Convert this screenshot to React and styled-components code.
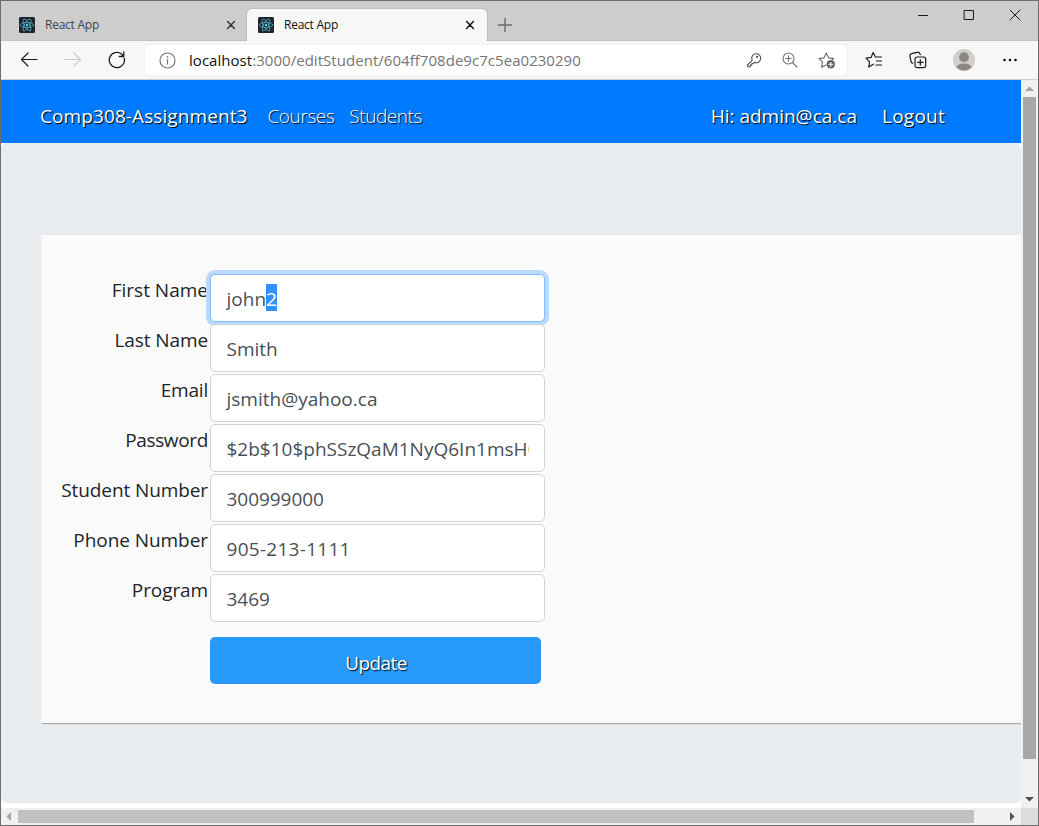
import React from "react";
import styled, { createGlobalStyle } from "styled-components";

const Global = createGlobalStyle`
  *, *::before, *::after { box-sizing: border-box; }
  html, body { margin: 0; padding: 0; overflow: hidden; }
  body { font-family: "Open Sans", "Noto Sans", sans-serif; background: #fff; }
`;

const Window = styled.div`
  width: 1039px;
  height: 826px;
  border: 1px solid #6e6c6d;
  display: flex;
  flex-direction: column;
  background: #fff;
  overflow: hidden;
`;

const TabStrip = styled.div`
  height: 40px;
  flex: none;
  display: flex;
  align-items: flex-end;
  background: #cdcdcd;
  box-shadow: inset 0 -1px #c2c2c2;
`;

const Tab = styled.div`
  width: ${(p) => (p.$active ? 240 : 246)}px;
  height: 32px;
  display: flex;
  align-items: center;
  padding: 0 ${(p) => (p.$active ? 12 : 11)}px 0 ${(p) => (p.$active ? 11 : 18)}px;
  border-radius: 5px 5px 0 0;
  background: ${(p) => (p.$active ? "#f7f7f7" : "transparent")};
  box-shadow: ${(p) => (p.$active ? "0 0 2px rgba(0,0,0,0.28)" : "none")};
  clip-path: inset(-3px -3px 0 -3px);
  color: ${(p) => (p.$active ? "#111" : "#444")};
`;

const TabTitle = styled.span`
  flex: 1;
  margin-left: 10px;
  font-size: 12px;
  line-height: 16px;
  letter-spacing: -0.25px;
`;

const Icon = styled.svg`
  display: block;
  flex: none;
  fill: none;
  stroke: ${(p) => p.$color || "#1b1b1b"};
  stroke-width: ${(p) => p.$weight || 1.2};
  stroke-linecap: round;
  stroke-linejoin: round;
  margin-left: ${(p) => p.$gap || 0}px;
`;

const NewTab = styled.div`
  align-self: stretch;
  display: flex;
  align-items: center;
  padding: 8px 0 0 10px;
`;

const WindowButtons = styled.div`
  margin-left: auto;
  align-self: flex-start;
  display: flex;
  align-items: center;
  height: 28px;
  padding-right: 17px;
`;

const Toolbar = styled.div`
  height: 39px;
  flex: none;
  display: flex;
  align-items: center;
  background: #f7f7f7;
  border-bottom: 1px solid #cfcfcf;
  padding-left: 19px;
`;

const AddressBar = styled.div`
  width: 701px;
  height: 30px;
  margin-left: 19px;
  display: flex;
  align-items: center;
  padding: 0 10px 0 14px;
  background: #fff;
  border-radius: 4px;
  box-shadow: 0 0 3px rgba(0, 0, 0, 0.06);
`;

const Url = styled.div`
  flex: 1;
  margin-left: 13px;
  font-size: 15px;
  line-height: 22px;
  letter-spacing: ${(p) => p.$track}px;
  white-space: nowrap;
  color: #757575;
`;

const Host = styled.span`
  color: #111;
`;

const Viewport = styled.div`
  flex: 1;
  display: flex;
  min-height: 0;
`;

const Page = styled.div`
  width: 1020px;
  height: 728px;
  flex: none;
  overflow: hidden;
`;

const Navbar = styled.nav`
  height: 63px;
  display: flex;
  align-items: center;
  padding: 9px 76px 1px 39px;
  background: #007bff;
`;

const NavText = styled.span`
  font-size: 19px;
  line-height: 30px;
  font-weight: ${(p) => (p.$light ? 300 : 400)};
  letter-spacing: ${(p) => p.$track || 0}px;
  margin-left: ${(p) => p.$gap || 0}px;
  white-space: nowrap;
  color: #fff;
  text-shadow: 1px 1px 1px #000;
`;

const Spacer = styled.div`
  flex: 1;
`;

const Jumbotron = styled.main`
  height: 660px;
  padding: 92px 0 0 40px;
  background: #e8ecef;
  border-radius: 6px;
  overflow: hidden;
`;

const Card = styled.div`
  width: 1000px;
  height: 488px;
  padding: 39px 0 0;
  background: #fafafa;
  box-shadow: 1px 1px 1px #a8a8a8;
`;

const Field = styled.div`
  height: 50px;
  display: flex;
`;

const Label = styled.label`
  width: 167px;
  margin-right: 2px;
  text-align: right;
  font-size: 19px;
  line-height: 32px;
  letter-spacing: ${(p) => p.$track || 0}px;
  color: #212529;
  white-space: nowrap;
`;

const Input = styled.div`
  width: 335px;
  height: 48px;
  padding: 0 15px;
  border: 1px solid ${(p) => (p.$focus ? "#80bdff" : "#ced4da")};
  border-radius: 5px;
  background: #fff;
  box-shadow: ${(p) => (p.$focus ? "0 0 0 4px #bad9fb" : "none")};
`;

const Value = styled.div`
  overflow: hidden;
  white-space: nowrap;
  font-size: 19px;
  height: 46px;
  line-height: 31px;
  padding: 9px 0 0 0.5px;
  letter-spacing: ${(p) => p.$track || 0}px;
  color: #495057;
`;

const Selected = styled.span`
  display: inline-block;
  vertical-align: top;
  height: 27px;
  background: #3390ff;
  color: #fff;
`;

const Submit = styled.div`
  width: 331px;
  height: 47px;
  margin: 13px 0 0 169px;
  padding: 5px 0 0 1px;
  display: flex;
  justify-content: center;
  align-items: center;
  background: #2699fb;
  border-radius: 5px;
`;

const ScrollY = styled.div`
  width: 17px;
  display: flex;
  flex-direction: column;
  align-items: center;
  justify-content: space-between;
  background: #f0f0f0;
`;

const ThumbY = styled.div`
  width: 13px;
  height: 662px;
  background: #a8a8a8;
`;

const ScrollX = styled.div`
  height: 17px;
  flex: none;
  display: flex;
  align-items: center;
  background: #f0f0f0;
`;

const ThumbX = styled.div`
  width: 956px;
  height: 13px;
  background: #c1c1c1;
`;

const Corner = styled.div`
  width: 17px;
  height: 17px;
  margin-left: 1px;
  background: #dcdcdc;
`;

const ArrowIcon = styled.svg`
  display: block;
  flex: none;
`;

const Arrow = ({ d, color }) => (
  <ArrowIcon width="17" height="17" viewBox="0 0 17 17">
    <path d={d} fill={color} />
  </ArrowIcon>
);

const ReactLogo = () => (
  <Icon width="16" height="16" viewBox="0 0 16 16" $color="#4fb3cc" $weight={0.75}>
    <rect width="16" height="16" rx="1.5" fill="#20232a" stroke="none" />
    <ellipse cx="8" cy="8" rx="6.7" ry="2.6" />
    <ellipse cx="8" cy="8" rx="6.7" ry="2.6" transform="rotate(60 8 8)" />
    <ellipse cx="8" cy="8" rx="6.7" ry="2.6" transform="rotate(120 8 8)" />
    <circle cx="8" cy="8" r="1.2" fill="#61dafb" stroke="none" />
  </Icon>
);

const TabClose = ({ color }) => (
  <Icon width="10" height="10" viewBox="0 0 10 10" $color={color} $weight={1.4}>
    <path d="M1.6 1.6l6.800 6.800M8.400 1.600L1.600 8.400" />
  </Icon>
);

const fields = [
  { label: "First Name", value: "john", selected: "2" },
  { label: "Last Name", labelTrack: -0.1, value: "Smith" },
  { label: "Email", labelTrack: -0.2, value: "jsmith@yahoo.ca" },
  { label: "Password", labelTrack: -0.35, value: "$2b$10$phSSzQaM1NyQ6In1msHO" },
  { label: "Student Number", labelTrack: -0.1, value: "300999000", valueTrack: -0.05 },
  { label: "Phone Number", labelTrack: -0.06, value: "905-213-1111", valueTrack: 0.28 },
  { label: "Program", labelTrack: -0.1, value: "3469" },
];

export default function App() {
  return (
    <Window>
      <Global />
      <TabStrip>
        <Tab>
          <ReactLogo />
          <TabTitle>React App</TabTitle>
          <TabClose color="#333" />
        </Tab>
        <Tab $active>
          <ReactLogo />
          <TabTitle>React App</TabTitle>
          <TabClose color="#111" />
        </Tab>
        <NewTab>
          <Icon width="16" height="16" viewBox="0 0 16 16" $color="#6a6a6a" $weight={1.4}>
            <path d="M8 1.5v13M1.5 8h13" />
          </Icon>
        </NewTab>
        <WindowButtons>
          <Icon width="12" height="12" viewBox="0 0 12 12" $weight={1}>
            <path d="M1.5 6.5h9" />
          </Icon>
          <Icon width="12" height="12" viewBox="0 0 12 12" $weight={1} $gap={34}>
            <path d="M1.5 1.5h9v9h-9z" strokeLinejoin="miter" />
          </Icon>
          <Icon width="12" height="12" viewBox="0 0 12 12" $weight={1} $gap={34}>
            <path d="M1 1l10 10M11 1L1 11" />
          </Icon>
        </WindowButtons>
      </TabStrip>
      <Toolbar>
        <Icon width="18" height="18" viewBox="0 0 18 18">
          <path d="M17 8.5H1.5M8 2L1.5 8.5 8 15" />
        </Icon>
        <Icon width="18" height="18" viewBox="0 0 18 18" $color="#cacaca" $gap={26}>
          <path d="M1 8.5h15.500M10 2l6.500 6.500L10 15" />
        </Icon>
        <Icon width="18" height="18" viewBox="0 0 18 18" $gap={26} $weight={1.3}>
          <path d="M16.300 7.500A7.600 7.600 0 1 1 13.500 3L15.500 5.200M15.800 1v4.500h-4.500" />
        </Icon>
        <AddressBar>
          <Icon width="17" height="17" viewBox="0 0 17 17" $color="#767676">
            <circle cx="8.500" cy="8.500" r="7.500" />
            <path d="M8.500 7.500v4.500" />
            <path d="M8.500 4.900v.2" strokeWidth="1.600" />
          </Icon>
          <Url $track={0.04}>
            <Host>localhost</Host>:3000/editStudent/604ff708de9c7c5ea0230290
          </Url>
          <Icon width="16" height="16" viewBox="0 0 16 16" $color="#505050" $weight={1.1}>
            <path d="M6.200 8.300L1.500 13v1.700h2.700v-1.600h1.600v-1.600h1.500l1-1.200a4.500 4.500 0 1 0-2.100-2z" />
            <circle cx="11" cy="4.800" r=".6" />
          </Icon>
          <Icon width="16" height="16" viewBox="0 0 16 16" $color="#707070" $gap={20} $weight={1.1}>
            <circle cx="6.500" cy="6.500" r="5.500" />
            <path d="M10.500 10.500l4.500 4.500M6.500 3.800v5.400M3.800 6.500h5.400" />
          </Icon>
          <Icon width="18" height="18" viewBox="0 0 18 18" $color="#6c6c6c" $gap={20} $weight={1.1}>
            <path d="M8 14l-4.400 2.200.9-5L1 7.600l4.900-.7L8.300 2l2.300 4.900 5 .7-1.300 1.500" />
            <circle cx="12.800" cy="13.300" r="4.200" fill="#606060" stroke="none" />
            <path d="M12.800 11.200v4.200M10.700 13.300h4.200" stroke="#fff" />
          </Icon>
        </AddressBar>
        <Icon width="18" height="18" viewBox="0 0 18 18" $gap={19}>
          <path d="M8.300 13.200l-4.500 2.900.8-5.300L1 7.100l5-.7L8.200 1.500l2.200 4.500h6.100M11.500 10h5M11 14h5.500" />
        </Icon>
        <Icon width="18" height="18" viewBox="0 0 18 18" $gap={26}>
          <rect x="6" y="6" width="10.700" height="10.700" rx="2.200" />
          <path d="M11.300 8.500v5.700M8.500 11.300h5.700M3.700 12.300C2.500 11.800 2.200 11 1.900 10L1 5.300C.7 4 1.400 3 2.700 2.700L8 1.300c1.500-.4 2.700.3 3 1.700l.3.700" />
        </Icon>
        <Icon width="22" height="22" viewBox="0 0 22 22" $gap={26} $color="none">
          <circle cx="11" cy="11" r="11" fill="#d0cecb" />
          <circle cx="11" cy="8.200" r="4.900" fill="#8a8684" />
          <path d="M3.500 18.500c1.400-5.400 13.600-5.400 15 0a11 11 0 0 1-15 0z" fill="#8a8684" />
        </Icon>
        <Icon width="16" height="16" viewBox="0 0 16 16" $gap={27} $color="none">
          <circle cx="2.500" cy="8" r="1.300" fill="#111" />
          <circle cx="8" cy="8" r="1.300" fill="#111" />
          <circle cx="13.500" cy="8" r="1.300" fill="#111" />
        </Icon>
      </Toolbar>
      <Viewport>
        <Page>
          <Navbar>
            <NavText $track={0.09}>Comp308-Assignment3</NavText>
            <NavText $light $gap={20} $track={-0.4}>Courses</NavText>
            <NavText $light $gap={15} $track={-0.45}>Students</NavText>
            <Spacer />
            <NavText>Hi: admin@ca.ca</NavText>
            <NavText $gap={25} $track={0.25}>Logout</NavText>
          </Navbar>
          <Jumbotron>
            <Card>
              {fields.map((f) => (
                <Field key={f.label}>
                  <Label $track={f.labelTrack}>{f.label}</Label>
                  <Input $focus={!!f.selected}>
                    <Value $track={f.valueTrack}>
                      {f.value}
                      {f.selected && <Selected>{f.selected}</Selected>}
                    </Value>
                  </Input>
                </Field>
              ))}
              <Submit>
                <NavText $track={-0.6}>Update</NavText>
              </Submit>
            </Card>
          </Jumbotron>
        </Page>
        <ScrollY>
          <Arrow d="M8.500 6.500L13 11H4z" color="#a3a3a3" />
          <ThumbY />
          <Spacer />
          <Arrow d="M4 6h9l-4.500 4.500z" color="#505050" />
        </ScrollY>
      </Viewport>
      <ScrollX>
        <Arrow d="M10 4v9L5.500 8.500z" color="#a3a3a3" />
        <ThumbX />
        <Spacer />
        <Arrow d="M7 4v9l4.500-4.500z" color="#505050" />
        <Corner />
      </ScrollX>
    </Window>
  );
}
